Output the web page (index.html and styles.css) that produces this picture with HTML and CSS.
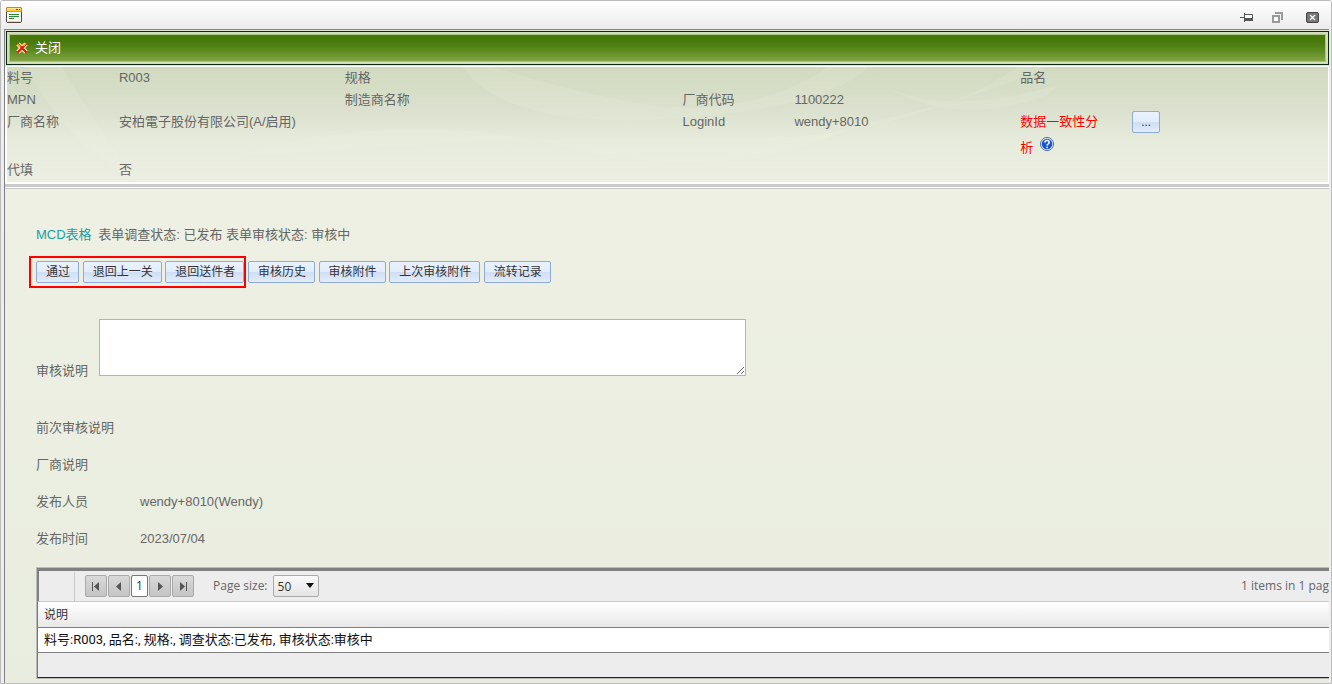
FILE: index.html
```html
<!DOCTYPE html>
<html lang="zh-CN">
<head>
<meta charset="utf-8">
<title>MCD表格</title>
<link rel="stylesheet" href="styles.css">
</head>
<body>
<div class="window">
  <header class="titlebar">
    <svg class="app-icon" width="16" height="16" viewBox="0 0 16 16">
      <rect x=".5" y=".5" width="15" height="15" rx="1.5" fill="#fbfaf6" stroke="#54463d"/>
      <path d="M1 1h14v4H1z" fill="#ffd23c"/><path d="M1 1h14v1H1z" fill="#ffe98a"/>
      <path d="M.5 5V1.500Q.5.5 1.500.5h13q1 0 1 1V5" fill="none" stroke="#cb8420"/>
      <path d="M1 4.500h14" stroke="#e29322"/>
      <path d="M10 2.500h2m1 0h1" stroke="#6b5310"/>
      <path d="M3 7.500h10M3 9.500h10M3 11.500h5" stroke="#2e8a36"/>
      <path d="M1 14.500h14" stroke="#d9d6d0"/>
    </svg>
    <div class="window-controls">
      <button type="button" aria-label="固定"><svg width="14" height="11" viewBox="0 0 14 11"><path d="M0 5.500h4" stroke="#555"/><path d="M4.500 1v9" stroke="#555"/><path d="M5 2.500h7.500v5.500H5" fill="#fff" stroke="#555"/><path d="M5 6h8v3H5z" fill="#555"/></svg></button>
      <button type="button" aria-label="还原"><svg width="11" height="11" viewBox="0 0 11 11"><path d="M3 0h8v8H9V2H3z" fill="#999"/><path d="M1 4h6v6H1z" fill="#fff" stroke="#999" stroke-width="2"/></svg></button>
      <button type="button" aria-label="关闭窗口"><svg width="13" height="11" viewBox="0 0 13 11"><rect x=".5" y=".5" width="12" height="10" rx="1.500" fill="#777" stroke="#444"/><path d="M4 3l5 5M9 3L4 8" stroke="#fff" stroke-width="1.200"/></svg></button>
    </div>
  </header>

  <div class="frame">
    <nav class="toolbar">
      <button type="button" class="close-command">
        <svg width="12" height="12" viewBox="0 0 12 12"><path d="M2 2l8 8M10 2L2 10" stroke="#fff8c0" stroke-width="4.500"/><path d="M1.500 1.500l9 9M10.500 1.500L1.500 10.500" stroke="#ea1204" stroke-width="2.200"/><path d="M1.500 2l3 3M10 1.500L7.500 4" stroke="#ffb020" stroke-width="1.300"/></svg>
        <span>关闭</span>
      </button>
    </nav>

    <section class="summary">
      <svg class="swirls" viewBox="0 0 1320 115" preserveAspectRatio="none" aria-hidden="true">
        <path d="M20 0Q55 75 130 115Q90 60 55 0z"/>
        <path d="M455 0Q500 62 660 52T860 0H820Q770 35 700 40T485 0z"/>
        <path d="M230 88Q400 40 560 80T860 55Q960 35 1040 0H1010Q900 75 700 72T300 85z"/>
        <path d="M850 0Q910 58 1050 18L1040 28Q930 68 850 0z"/>
      </svg>
      <div class="fields">
        <span>料号</span><span>R003</span><span>规格</span><span></span><span></span><span></span><span>品名</span><span></span>
        <span>MPN</span><span></span><span>制造商名称</span><span></span><span>厂商代码</span><span>1100222</span><span></span><span></span>
        <span>厂商名称</span><span>安柏電子股份有限公司(A/启用)</span><span></span><span></span><span>LoginId</span><span>wendy+8010</span>
        <label class="analysis" for="analysis">数据一致性分析 <svg width="14" height="14" viewBox="0 0 14 14"><circle cx="7" cy="7" r="6.500" fill="#fff" stroke="#3a66a6"/><circle cx="7" cy="7" r="5.300" fill="#1a55d0"/><path d="M4.900 5.600Q5 3.600 7.100 3.600T9.200 5.500Q9.200 6.500 8 7.100Q7.100 7.500 7.100 8.400" fill="none" stroke="#fff" stroke-width="1.500"/><circle cx="7.100" cy="10.300" r=".9" fill="#fff"/></svg></label>
        <span><button type="button" class="btn" id="analysis">...</button></span>
        <span>代填</span><span>否</span>
      </div>
    </section>

    <main class="content">
      <p class="status"><a href="#">MCD表格</a> <span>表单调查状态: 已发布 表单审核状态: 审核中</span></p>
      <div class="actions">
        <span class="marked"><button type="button" class="btn">通过</button> <button type="button" class="btn">退回上一关</button> <button type="button" class="btn">退回送件者</button></span>
        <button type="button" class="btn">审核历史</button>
        <button type="button" class="btn">审核附件</button>
        <button type="button" class="btn">上次审核附件</button>
        <button type="button" class="btn">流转记录</button>
      </div>
      <div class="note">
        <label for="note">审核说明</label>
        <textarea id="note"></textarea>
      </div>
      <dl class="details">
        <dt>前次审核说明</dt><dd></dd>
        <dt>厂商说明</dt><dd></dd>
        <dt>发布人员</dt><dd>wendy+8010(Wendy)</dd>
        <dt>发布时间</dt><dd>2023/07/04</dd>
      </dl>

      <section class="grid">
        <div class="pager">
          <div class="pages">
            <button type="button" aria-label="首页"><svg width="10" height="9" viewBox="0 0 10 9"><path d="M1.500 0v9" stroke="#555"/><path d="M8 0v9L3 4.500z" fill="#555"/></svg></button>
            <button type="button" aria-label="上一页"><svg width="10" height="9" viewBox="0 0 10 9"><path d="M7 0v9L2 4.500z" fill="#555"/></svg></button>
            <button type="button" class="current">1</button>
            <button type="button" aria-label="下一页"><svg width="10" height="9" viewBox="0 0 10 9"><path d="M3 0v9l5-4.500z" fill="#555"/></svg></button>
            <button type="button" aria-label="末页"><svg width="10" height="9" viewBox="0 0 10 9"><path d="M8.500 0v9" stroke="#555"/><path d="M2 0v9l5-4.500z" fill="#555"/></svg></button>
          </div>
          <label for="page-size">Page size:</label>
          <div class="select">
            <select id="page-size"><option>50</option></select>
            <svg width="8" height="5" viewBox="0 0 8 5"><path d="M0 0h8L4 5z" fill="#111"/></svg>
          </div>
          <span class="count">1 items in 1 pag</span>
        </div>
        <table>
          <thead><tr><th>说明</th></tr></thead>
          <tbody><tr><td>料号:R003, 品名:, 规格:, 调查状态:已发布, 审核状态:审核中</td></tr></tbody>
          <tfoot><tr><td></td></tr></tfoot>
        </table>
      </section>
    </main>
  </div>
</div>
</body>
</html>
```
FILE: styles.css
```css
* { box-sizing: border-box; }
body {
  margin: 0;
  color: #666;
  font: 13px/22px "Liberation Sans", "Noto Sans CJK SC", sans-serif;
}
button, select, textarea { font: inherit; color: inherit; }
svg { flex: none; }

.window {
  display: flex;
  flex-direction: column;
  height: 100vh;
  padding: 0 2px 0 3px;
  border: 1px solid #bbb;
  border-radius: 3px 3px 0 0;
  background: #eee;
  overflow: hidden;
}
.titlebar {
  display: flex;
  flex: none;
  justify-content: space-between;
  align-items: center;
  height: 28px;
  margin: 0 -2px 0 -3px;
  padding: 0 12px 0 5px;
  background: linear-gradient(#fff, #ececec);
}
.window-controls { display: flex; gap: 18px; padding-top: 4px; }
.window-controls button {
  display: flex;
  padding: 0;
  border: 0;
  background: none;
}
.window-controls button:last-child { margin-left: 5px; }

.frame {
  display: flex;
  flex: 1;
  flex-direction: column;
  min-height: 0;
  border-top: 1px solid #7f8c8d;
  border-left: 1px solid #7f8083;
  background: #fff;
}
.toolbar {
  display: flex;
  align-items: center;
  flex: none;
  height: 34px;
  margin: 1px 0 2px 1px;
  border: 1px solid #0f2a10;
  outline: 1px solid #dce5d0;
  background: linear-gradient(#457809, #47790b 30%, #5e8c22 60%, #84a544 92%, #aac07c) padding-box;
  box-shadow: inset 0 0 0 2px #d2dfbc, inset 0 0 0 3px #aebf88;
}
.close-command {
  display: flex;
  align-items: center;
  gap: 7px;
  padding: 0 0 0 9px;
  border: 0;
  background: none;
  color: #fff;
  font-size: 13px;
}
.summary {
  position: relative;
  flex: none;
  margin: 0 1px 0 2px;
  background: linear-gradient(#d1dabf, #dae0cd 35%, #e7ebdc 65%, #ebeee1);
}
.swirls {
  position: absolute;
  inset: 0;
  width: 100%;
  height: 100%;
  fill: #f6fae8;
  opacity: .12;
}
.fields {
  position: relative;
  display: grid;
  grid-template-columns: 112fr 226fr 112fr 226fr 112fr 226fr 112fr 196fr;
  grid-template-rows: 22px 22px auto 23px;
}
.fields > * { min-width: 0; }
.analysis {
  padding-right: 26px;
  color: #f00;
}
.analysis svg { margin: 4px 0 0 3px; vertical-align: 1px; }

.btn {
  height: 22px;
  padding: 0 8px 0 9px;
  border: 1px solid #8facd5;
  border-radius: 2px;
  background: linear-gradient(#e9f2ff, #e3ecfb 50%, #cfdef3 50%, #e2ecfc);
  color: #333;
  font-size: 12px;
  line-height: 20px;
  vertical-align: top;
}
.fields .btn { padding: 0 8px; }
.content {
  flex: 1;
  min-height: 0;
  padding: 37px 0 0 31px;
  border-top: 3px solid #c9c9c9;
  margin-top: 2px;
  background: linear-gradient(#fff 1px, #c9c9c9 1px, #c9c9c9 2px, #edf0e2 2px, #e9eddf);
  overflow: hidden;
}
.status { margin: 0 0 15px; }
.status a { color: #219ea5; text-decoration: none; }
.status span { margin-left: 3px; }
.actions { height: 22px; }
.marked { position: relative; display: inline-block; height: 22px; }
.marked::after {
  content: "";
  position: absolute;
  inset: -5px -2px -5px -7px;
  border: 2px solid #f00;
  pointer-events: none;
}
.note {
  display: flex;
  align-items: flex-end;
  gap: 11px;
  margin: 36px 0 41px;
}
.note label { line-height: 10px; }
.note textarea {
  width: 50%;
  height: 57px;
  border: 1px solid #9fb8d8;
  background: #fff;
}
.details {
  display: grid;
  grid-template-columns: 104px 1fr;
  gap: 15px 0;
  margin: 0 0 17px;
}
.details dd { margin: 0; }

.grid {
  border: solid #bbb;
  border-width: 1px 0 1px 1px;
  color: #666;
  font: 12px/22px "Open Sans", "Noto Sans CJK SC", sans-serif;
}
.pager {
  display: flex;
  align-items: center;
  height: 34px;
  border-top: 3px solid #808080;
  border-left: 2px solid #808080;
  border-bottom: 1px solid #c9c9c9;
  background: #ededed;
}
.pages {
  display: flex;
  align-items: center;
  gap: 1px;
  height: 29px;
  margin-left: 35px;
  padding-left: 10px;
  border-left: 1px solid #c9c9c9;
}
.pages button {
  display: flex;
  justify-content: center;
  align-items: center;
  width: 22px;
  height: 22px;
  padding: 0;
  border: 1px solid #aaa;
  border-radius: 2px;
  background: linear-gradient(#d9d9d9, #c4c4c4);
}
.pages .current { width: 17px; border-color: #777; background: #fff; color: #333; }
.pager label { margin: 0 5px 0 19px; }
.select { position: relative; width: 46px; height: 22px; }
.select select {
  width: 100%;
  height: 22px;
  padding: 0 4px;
  border: 1px solid #aaa;
  border-radius: 2px;
  background: linear-gradient(#fafafa, #e4e4e4);
  color: #333;
  appearance: none;
}
.select svg { position: absolute; top: 8px; right: 5px; pointer-events: none; }
.count { margin-left: auto; white-space: nowrap; }
.grid table {
  width: 100%;
  border-collapse: separate;
  border-spacing: 0;
  border-left: 1px solid #777;
  border-bottom: 1px solid #222;
}
.grid th, .grid td { height: 25px; padding: 0 6px; text-align: left; }
.grid th {
  height: 26px;
  border-bottom: 1px solid #808080;
  background: linear-gradient(#fff, #e8e8e8);
  color: #333;
  font-weight: 400;
}
.grid tbody td {
  border-bottom: 1px solid #808080;
  background: #fff;
  color: #111;
  font-family: Roboto, "Noto Sans CJK SC", sans-serif;
  font-size: 13px;
}
.grid tfoot td { height: 24px; background: #ededed; }
```
